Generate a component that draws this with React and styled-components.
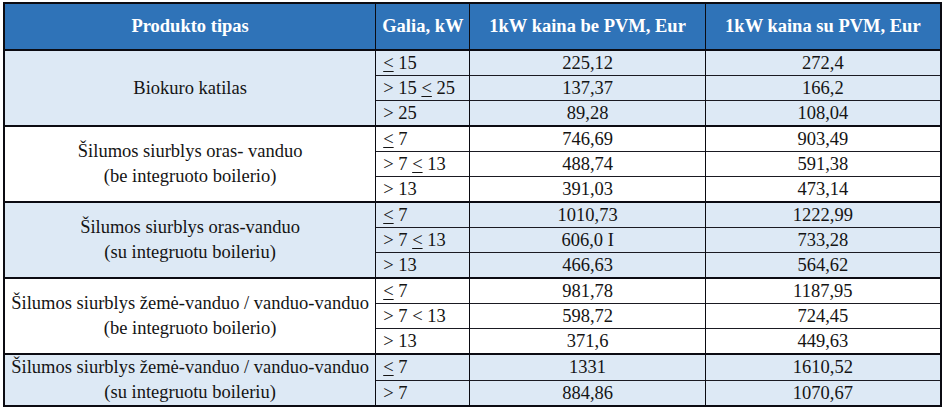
import styled, { createGlobalStyle } from "styled-components";

const GlobalStyle = createGlobalStyle`
  html, body {
    margin: 0;
    padding: 0;
    background: #fff;
    font-family: "Liberation Serif", serif;
  }
`;

const groups = [
  {
    name: ["Biokuro katilas"],
    shaded: true,
    rows: [
      [["le"], " 15", "225,12", "272,4"],
      [["gt"], " 15 ", ["le"], " 25", "137,37", "166,2"],
      [["gt"], " 25", "89,28", "108,04"],
    ],
  },
  {
    name: ["Šilumos siurblys oras- vanduo", "(be integruoto boilerio)"],
    shaded: false,
    rows: [
      [["le"], " 7", "746,69", "903,49"],
      [["gt"], " 7 ", ["le"], " 13", "488,74", "591,38"],
      [["gt"], " 13", "391,03", "473,14"],
    ],
  },
  {
    name: ["Šilumos siurblys oras-vanduo", "(su integruotu boileriu)"],
    shaded: true,
    rows: [
      [["le"], " 7", "1010,73", "1222,99"],
      [["gt"], " 7 ", ["le"], " 13", "606,0 I", "733,28"],
      [["gt"], " 13", "466,63", "564,62"],
    ],
  },
  {
    name: ["Šilumos siurblys žemė-vanduo / vanduo-vanduo", "(be integruoto boilerio)"],
    shaded: false,
    rows: [
      [["le"], " 7", "981,78", "1187,95"],
      [["gt"], " 7 < 13", "598,72", "724,45"],
      [["gt"], " 13", "371,6", "449,63"],
    ],
  },
  {
    name: ["Šilumos siurblys žemė-vanduo / vanduo-vanduo", "(su integruotu boileriu)"],
    shaded: true,
    rows: [
      [["le"], " 7", "1331", "1610,52"],
      [["gt"], " 7", "884,86", "1070,67"],
    ],
  },
];

const Page = styled.div`
  padding: 2px 2px 0 3px;
`;

const Table = styled.table`
  width: 939px;
  table-layout: fixed;
  border-collapse: collapse;
  border: 2px solid #0b0b12;
  font-family: "Liberation Serif", serif;
  font-size: 18.5px;
  color: #141414;
`;

const HeadCell = styled.th`
  height: 45px;
  padding: 0;
  background: #2f73b8;
  color: #fff;
  font-family: "Liberation Serif", serif;
  font-weight: bold;
  font-size: 18.5px;
  text-align: center;
  white-space: nowrap;
  border-right: 1px solid #0b0b12;
  border-bottom: 2px solid #0b0b12;
  width: ${(p) => p.$w}%;
`;

const Row = styled.tr`
  background: ${(p) => (p.$shaded ? "#dde9f5" : "#fff")};
  border-top: ${(p) => (p.$first ? "2px solid #0b0b12" : "1px solid #1a1a22")};
`;

const NameCell = styled.td`
  font-family: "Liberation Serif", serif;
  text-align: center;
  vertical-align: middle;
  line-height: 25px;
  padding: 0;
  white-space: nowrap;
  border-right: 1px solid #0b0b12;
`;

const PowerCell = styled.td`
  font-family: "Liberation Serif", serif;
  height: 24px;
  line-height: 24px;
  padding: 0 0 0 7px;
  text-align: left;
  border-right: 1px solid #0b0b12;
  white-space: nowrap;
`;

const ValueCell = styled.td`
  font-family: "Liberation Serif", serif;
  height: 24px;
  line-height: 24px;
  padding: 0;
  text-align: center;
  border-right: 1px solid #0b0b12;
`;

const LessEq = styled.span`
  text-decoration: underline;
  text-underline-offset: 2px;
`;

const renderPower = (parts) =>
  parts.map((p, i) =>
    Array.isArray(p) ? (
      p[0] === "le" ? <LessEq key={i}>&lt;</LessEq> : <span key={i}>&gt;</span>
    ) : (
      <span key={i}>{p}</span>
    )
  );

export default function App() {
  return (
    <Page>
      <GlobalStyle />
      <Table>
        <thead>
          <tr>
            <HeadCell $w={39.72}>Produkto tipas</HeadCell>
            <HeadCell $w={10.01}>Galia, kW</HeadCell>
            <HeadCell $w={25.13}>1kW kaina be PVM, Eur</HeadCell>
            <HeadCell $w={25.14}>1kW kaina su PVM, Eur</HeadCell>
          </tr>
        </thead>
        <tbody>
          {groups.map((g, gi) =>
            g.rows.map((r, ri) => {
              const power = r.slice(0, -2);
              const [net, gross] = r.slice(-2);
              return (
                <Row key={`${gi}-${ri}`} $shaded={g.shaded} $first={ri === 0}>
                  {ri === 0 && (
                    <NameCell rowSpan={g.rows.length}>
                      {g.name.map((line, li) => (
                        <div key={li}>{line}</div>
                      ))}
                    </NameCell>
                  )}
                  <PowerCell>{renderPower(power)}</PowerCell>
                  <ValueCell>{net}</ValueCell>
                  <ValueCell>{gross}</ValueCell>
                </Row>
              );
            })
          )}
        </tbody>
      </Table>
    </Page>
  );
}
